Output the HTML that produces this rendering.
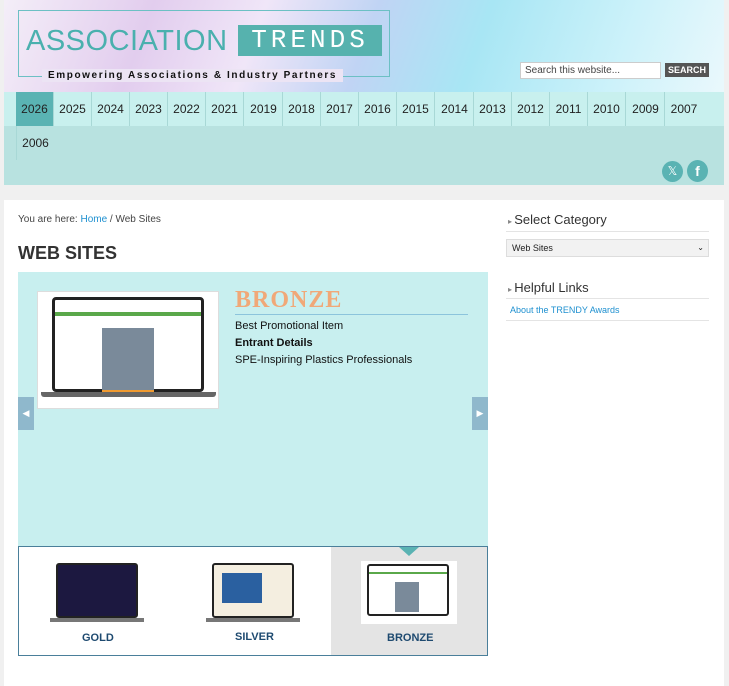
<!DOCTYPE html>
<html><head><style>
*{margin:0;padding:0;box-sizing:border-box}
body{width:729px;height:686px;background:#f0f0f0;font-family:"Liberation Sans",sans-serif;position:relative;overflow:hidden}
.abs{position:absolute}
.hdr{left:4px;top:0;width:720px;height:92px;background:linear-gradient(110deg,#f4eef8 0%,#e2cdee 20%,#f0e6f8 35%,#c0d4f4 50%,#a8e6f4 65%,#cdf2fa 85%,#eaf8fc 100%)}
.nav{left:4px;top:92px;width:720px;height:93px;background:#b8e2e0}
.row1{left:4px;top:92px;width:720px;height:34px;background:#c8f0ee}
.yr{position:absolute;top:92px;height:34px;width:38px;font-size:12px;line-height:34px;text-align:center;color:#222;border-right:1px solid #a8d8d6}
.main{left:4px;top:200px;width:720px;height:486px;background:#fff}
.laptop{background:#fff;border:1px solid #ddd}
</style></head><body>
<div class="abs hdr"></div>
<div class="abs" style="left:18px;top:10px;width:372px;height:67px;border:1px solid #6cc0c4"></div>
<div class="abs" style="left:26px;top:26px;font-size:29px;color:#4ab0ae;letter-spacing:0.5px;line-height:30px">ASSOCIATION</div>
<div class="abs" style="left:238px;top:25px;width:144px;height:31px;background:#56b2ae;color:#fff;font-family:'Liberation Mono',monospace;font-size:26px;line-height:31px;letter-spacing:4px;text-align:center">TRENDS</div>
<div class="abs" style="left:42px;top:69px;padding:0 6px;background:#ece4f4;font-size:10px;font-weight:bold;letter-spacing:1.6px;color:#111;line-height:13px">Empowering Associations &amp; Industry Partners</div>
<div class="abs" style="left:520px;top:62px;width:141px;height:17px;background:#fff;border:1px solid #ccc;font-size:10px;color:#444;line-height:15px;padding-left:4px">Search this website...</div>
<div class="abs" style="left:665px;top:63px;width:44px;height:14px;background:#555;color:#fff;font-size:9px;font-weight:bold;line-height:14px;text-align:center">SEARCH</div>
<div class="abs nav"></div><div class="abs row1"></div>
<div class="yr" style="left:16px;background:#5ab3b3">2026</div>
<div class="yr" style="left:54px">2025</div><div class="yr" style="left:92px">2024</div><div class="yr" style="left:130px">2023</div><div class="yr" style="left:168px">2022</div><div class="yr" style="left:206px">2021</div><div class="yr" style="left:245px">2019</div><div class="yr" style="left:283px">2018</div><div class="yr" style="left:321px">2017</div><div class="yr" style="left:359px">2016</div><div class="yr" style="left:397px">2015</div><div class="yr" style="left:436px">2014</div><div class="yr" style="left:474px">2013</div><div class="yr" style="left:512px">2012</div><div class="yr" style="left:550px">2011</div><div class="yr" style="left:588px">2010</div><div class="yr" style="left:627px">2009</div><div class="yr" style="left:665px;border:none">2007</div>
<div class="yr" style="left:16px;top:126px;border:none;border-left:1px solid #a8d8d6">2006</div>
<div class="abs" style="left:662px;top:161px;width:21px;height:21px;border-radius:50%;background:#5ab3b3;color:#fff;font-size:12px;text-align:center;line-height:21px">𝕏</div>
<div class="abs" style="left:687px;top:160px;width:21px;height:22px;border-radius:50%;background:#5ab3b3;color:#fff;font-size:14px;font-weight:bold;text-align:center;line-height:22px">f</div>
<div class="abs main"></div>
<div class="abs" style="left:18px;top:214px;font-size:10px;color:#444">You are here: <span style="color:#1e90d0">Home</span> / Web Sites</div>
<div class="abs" style="left:18px;top:243px;font-size:18px;font-weight:bold;color:#333">WEB SITES</div>
<div class="abs" style="left:18px;top:272px;width:470px;height:274px;background:#c8efef"></div>
<div class="abs laptop" style="left:37px;top:291px;width:182px;height:118px"><div style="position:absolute;left:14px;top:5px;width:152px;height:95px;border:3px solid #222;border-radius:4px;background:#fff"><div style="height:4px;margin-top:12px;background:#5aa84a"></div><div style="position:absolute;left:47px;top:28px;width:52px;height:62px;background:#7a8a9a"></div><div style="position:absolute;left:47px;top:90px;width:52px;height:4px;background:#f09a30"></div></div><div style="position:absolute;left:3px;top:100px;width:175px;height:5px;background:#666;border-radius:0 0 3px 3px"></div></div>
<div class="abs" style="left:235px;top:287px;font-family:'Liberation Serif',serif;font-weight:900;font-size:24px;color:#f0a878;letter-spacing:1px">BRONZE</div>
<div class="abs" style="left:235px;top:314px;width:233px;height:1px;background:#8cc4dc"></div>
<div class="abs" style="left:235px;top:320px;font-size:11px;color:#111">Best Promotional Item</div>
<div class="abs" style="left:235px;top:337px;font-size:11px;font-weight:bold;color:#111">Entrant Details</div>
<div class="abs" style="left:235px;top:354px;font-size:11px;color:#111">SPE-Inspiring Plastics Professionals</div>
<div class="abs" style="left:18px;top:397px;width:16px;height:33px;background:#8fb8cc;color:#fff;font-size:9px;line-height:33px;text-align:center">◀</div>
<div class="abs" style="left:472px;top:397px;width:16px;height:33px;background:#8fb8cc;color:#fff;font-size:9px;line-height:33px;text-align:center">▶</div>
<div class="abs" style="left:18px;top:546px;width:470px;height:110px;border:1px solid #4a7f9a;background:#fff"></div>
<div class="abs" style="left:331px;top:547px;width:156px;height:108px;background:#e4e4e4"></div>
<div class="abs" style="left:399px;top:547px;width:0;height:0;border-left:10px solid transparent;border-right:10px solid transparent;border-top:9px solid #5ab3b3"></div>
<div class="abs" style="left:56px;top:563px;width:82px;height:55px;background:#1c1840;border:2px solid #222;border-radius:3px"></div>
<div class="abs" style="left:50px;top:618px;width:94px;height:4px;background:#777"></div>
<div class="abs" style="left:212px;top:563px;width:82px;height:55px;background:#f4eee0;border:2px solid #222;border-radius:3px"><div style="margin:8px 0 0 8px;width:40px;height:30px;background:#2a60a0"></div></div>
<div class="abs" style="left:206px;top:618px;width:94px;height:4px;background:#777"></div>
<div class="abs" style="left:361px;top:561px;width:96px;height:63px;background:#fff"><div style="margin:3px 0 0 6px;width:82px;height:52px;border:2px solid #222;border-radius:3px"><div style="height:2px;margin-top:6px;background:#5aa84a"></div><div style="margin:8px 0 0 26px;width:24px;height:30px;background:#7a8a9a"></div></div></div>
<div class="abs" style="left:82px;top:632px;font-size:11px;font-weight:bold;color:#1e4a70">GOLD</div>
<div class="abs" style="left:235px;top:631px;font-size:11px;font-weight:bold;color:#1e4a70">SILVER</div>
<div class="abs" style="left:387px;top:632px;font-size:11px;font-weight:bold;color:#1e4a70">BRONZE</div>
<div class="abs" style="left:508px;top:212px;font-size:13px;color:#333"><span style="font-size:8px;color:#888">▸ </span>Select Category</div>
<div class="abs" style="left:506px;top:231px;width:203px;height:1px;background:#e4e4e4"></div>
<div class="abs" style="left:506px;top:239px;width:203px;height:18px;background:#f2f2f2;border:1px solid #ddd;font-size:9px;line-height:16px;padding-left:5px;color:#222">Web Sites<span style="position:absolute;right:4px;font-size:8px">⌄</span></div>
<div class="abs" style="left:508px;top:280px;font-size:13px;color:#333"><span style="font-size:8px;color:#888">▸ </span>Helpful Links</div>
<div class="abs" style="left:506px;top:298px;width:203px;height:1px;background:#e4e4e4"></div>
<div class="abs" style="left:510px;top:305px;font-size:9px;color:#1e90d0">About the TRENDY Awards</div>
<div class="abs" style="left:506px;top:320px;width:203px;height:1px;background:#e4e4e4"></div>
</body></html>
